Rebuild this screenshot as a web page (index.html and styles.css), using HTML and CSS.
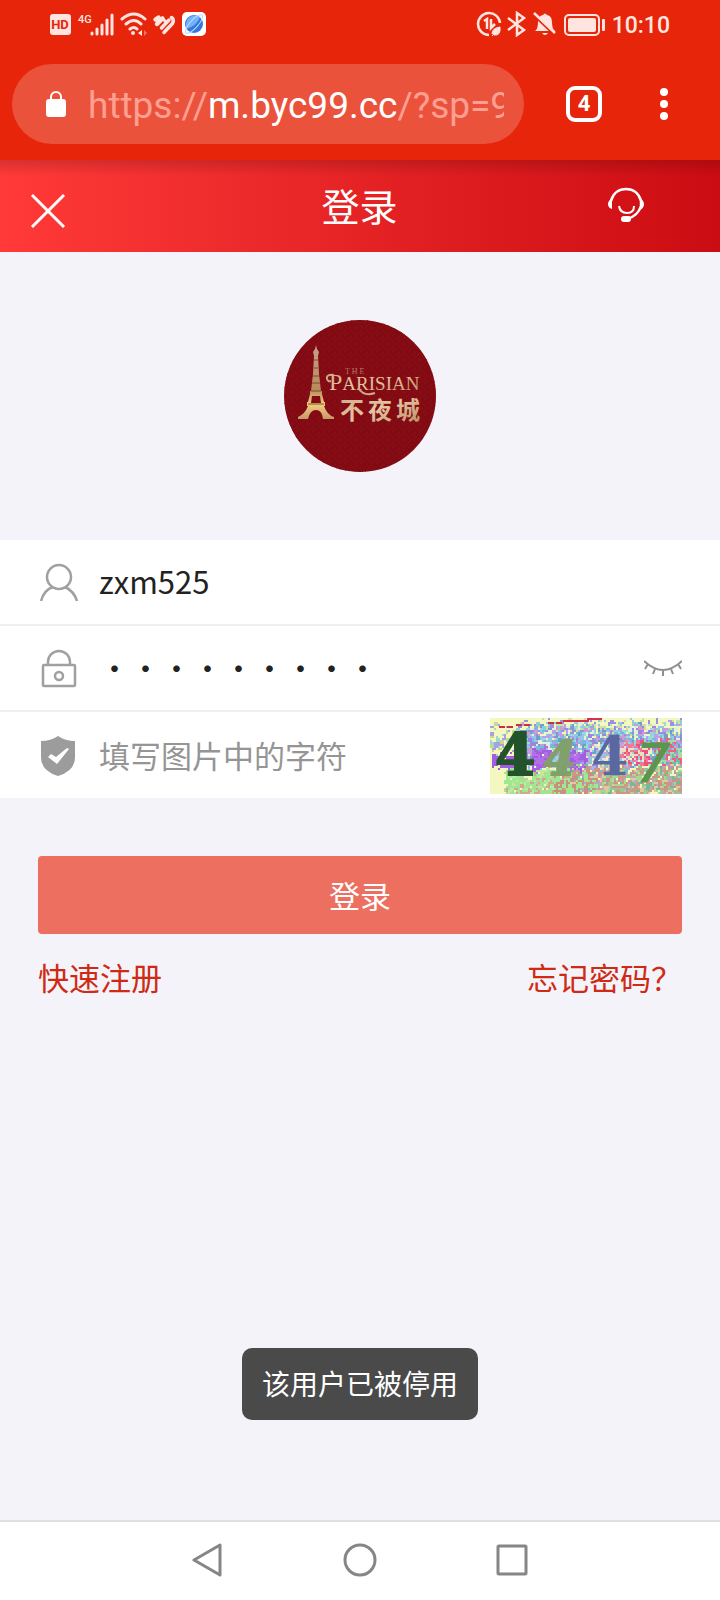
FILE: index.html
```html
<!DOCTYPE html>
<html lang="zh-CN">
<head>
    <meta charset="UTF-8">
    <meta name="viewport" content="width=device-width, initial-scale=1.0">
    <title>登录</title>
    <link rel="stylesheet" href="styles.css">
</head>
<body>
    <div class="browser">
        <div class="status-bar">
            <div class="status-left">
                <svg width="158" height="26" viewBox="0 0 158 26">
                    <g fill="#ffe4df">
                        <rect x="1" y="3" width="21" height="21" rx="3"/>
                        <text class="hd" x="11" y="18" text-anchor="middle">HD</text>
                        <text class="net" x="29" y="12">4G</text>
                    </g>
                    <g stroke="#ffe4df" stroke-width="3" stroke-linecap="round" fill="none">
                        <path d="M43 22v1M48 18v5M53 14v9M58 9v14M63 4v19"/>
                        <path d="M73 8q12-10 23 0M77 13q8-7 15 0M81 18q4-3 7 0"/>
                    </g>
                    <circle cx="84" cy="22" r="2" fill="#ffe4df"/>
                    <path d="M93 19v6l-4-3z" fill="#ffe4df"/>
                    <path d="M95 19v6l3-3z" fill="#f37666"/>
                    <g stroke="#ffe4df" stroke-linecap="round" stroke-linejoin="round" fill="none">
                        <path d="M106.500 8.500l3-2M108 13l5.500-5.500" stroke-width="4.500"/>
                        <path d="M112.500 17l7.500-8" stroke-width="3.500"/>
                        <path d="M115 21.500l8.500-9q2-4-1-6" stroke-width="3.500"/>
                        <path d="M113.500 7.500l3 3" stroke-width="3"/>
                    </g>
                    <rect x="133" y="1" width="24" height="24" rx="5" fill="#fff"/>
                    <circle cx="145" cy="13" r="9" fill="#3478dc"/>
                    <path d="M137 13a9 9 0 0 1 14-7q-3 9-14 12z" fill="#72b2fa"/>
                    <ellipse cx="145" cy="13" rx="12" ry="4" transform="rotate(-48 145 13)" fill="none" stroke="#b9dcff" stroke-width="1"/>
                </svg>
            </div>
            <div class="status-right">
                <svg width="130" height="26" viewBox="0 0 130 26">
                    <g fill="none" stroke="#ffe4df">
                        <path d="M13 24A11 11 0 1 1 24 12M8 10l3-2v10M15 8v9l4-4" stroke-width="2.500"/>
                        <path d="M16 23q0-6 8-7q1 9-6 8M16 25l4-4" fill="#ffe4df" stroke-width="1"/>
                        <path d="M32 7l16 12-7 5V2l7 5-16 12" stroke-width="2.500"/>
                        <rect x="89" y="4" width="34" height="20" rx="4" stroke-width="2"/>
                    </g>
                    <path d="M59 20q3-2 3-9 0-6 5-7 2-3 4 0 5 1 5 7 0 7 3 9zM66 22h6q-3 4-6 0" fill="#ffe4df"/>
                    <path d="M59 5l20 19" stroke="#e6250b" stroke-width="3"/>
                    <path d="M58 2l21 20" stroke="#ffe4df" stroke-width="2.500"/>
                    <rect x="92" y="7" width="28" height="14" rx="2" fill="#ffe4df"/>
                    <rect x="126" y="8" width="3" height="12" rx="1" fill="#ffe4df"/>
                </svg>
                <span class="time">10:10</span>
            </div>
        </div>
        <div class="address-bar">
            <div class="url">
                <svg width="22" height="28" viewBox="0 0 22 28">
                    <rect x="1" y="9" width="20" height="18" rx="3" fill="#fff"/>
                    <path d="M6 10V7a5 5 0 0 1 10 0v3" fill="none" stroke="#fff" stroke-width="2"/>
                </svg>
                <div class="url-text">https://<b>m.byc99.cc</b>/?sp=9</div>
            </div>
            <button type="button" class="tabs" aria-label="标签页">4</button>
            <button type="button" class="more" aria-label="更多">
                <svg width="10" height="34" viewBox="0 0 10 34" fill="#fff">
                    <circle cx="5" cy="5" r="4"/>
                    <circle cx="5" cy="17" r="4"/>
                    <circle cx="5" cy="29" r="4"/>
                </svg>
            </button>
        </div>
    </div>

    <div class="header">
        <button type="button" class="icon-btn" aria-label="关闭">
            <svg width="36" height="36" viewBox="0 0 36 36">
                <path d="M2 2l32 32M34 2L2 34" stroke="#fff" stroke-width="3"/>
            </svg>
        </button>
        <h1>登录</h1>
        <button type="button" class="icon-btn service" aria-label="客服">
            <svg width="38" height="36" viewBox="0 0 38 36">
                <path d="M4 14C6 6 12 2 19 2s13 4 15 12v5q-3 10-14 13" fill="none" stroke="#fff" stroke-width="2.500"/>
                <path d="M12 19q1 7 8 7t7-7" fill="none" stroke="#fff" stroke-width="2"/>
                <path d="M5 11q-4 3-4 6 0 4 4 5zM33 11q4 3 4 6 0 4-4 6z" fill="#fff"/>
                <rect x="14" y="29" width="10" height="6" rx="3" fill="#fff"/>
            </svg>
        </button>
    </div>

    <div class="logo">
        <svg width="152" height="152" viewBox="0 0 152 152">
            <defs>
                <pattern id="weave" width="16" height="16" patternUnits="userSpaceOnUse">
                    <path d="M8 1l7 7-7 7-7-7zM0 4l4-4M12 16l4-4M8 5v6M5 8h6" fill="none" stroke="#8a0f17" stroke-width="1"/>
                </pattern>
                <linearGradient id="gold" x1="0" y1="0" x2="1" y2="1">
                    <stop offset="0" stop-color="#d0a684"/>
                    <stop offset="0.5" stop-color="#e4c6a2"/>
                    <stop offset="1" stop-color="#b98d66"/>
                </linearGradient>
                <linearGradient id="tower" x1="0" y1="0" x2="0" y2="1">
                    <stop offset="0" stop-color="#c6a08a"/>
                    <stop offset="0.6" stop-color="#b98a5c"/>
                    <stop offset="0.8" stop-color="#f2cc80"/>
                    <stop offset="1" stop-color="#c49a68"/>
                </linearGradient>
            </defs>
            <circle cx="76" cy="76" r="76" fill="#820a13"/>
            <circle cx="76" cy="76" r="76" fill="url(#weave)"/>
            <path d="M32 25l1 4 2 3-1 4 1 18 2 17h1v3l2 8h1v4h-1q3 9 10 11v2H39q-1-9-7-9t-8 9H14v-2q7-3 10-11h-1v-4h1l2-8v-3h1l2-17 1-18-1-4 2-3zM28 76l-1 7h10l-1-7z" fill="url(#tower)" fill-rule="evenodd"/>
            <path d="M30 40h4M30 48h4M29 56h6M28 63h8M27 71h10M24 84h16" stroke="#7c4a2c" stroke-width="1"/>
            <g fill="url(#gold)">
                <text class="logo-the" x="61" y="54">T H E</text>
                <text class="logo-name" x="45" y="70"><tspan class="logo-cap">P</tspan>ARISIAN</text>
                <text class="logo-cn"><tspan x="56" y="99">不</tspan><tspan x="84" y="99">夜</tspan><tspan x="112" y="99">城</tspan></text>
            </g>
            <path d="M50 55q-8-1-7 4 1 3 4 2M74 68q6 9 17 5" fill="none" stroke="#d0a684" stroke-width="2"/>
        </svg>
    </div>

    <form id="login-form">
        <div class="fields">
            <div class="row">
                <label for="username" aria-label="账号">
                    <svg width="40" height="40" viewBox="0 0 40 40" fill="none" stroke="#a0a0a0" stroke-width="2.500">
                        <circle cx="20" cy="15" r="12"/>
                        <path d="M2 39q3-11 12-14M26 25q9 4 12 14"/>
                    </svg>
                </label>
                <input type="text" id="username" value="zxm525">
            </div>
            <div class="row">
                <label for="password" aria-label="密码">
                    <svg width="40" height="40" viewBox="0 0 40 40" fill="none" stroke="#a0a0a0" stroke-width="2.500">
                        <rect x="4" y="17" width="32" height="21" rx="1"/>
                        <path d="M9 17v-3a11 11 0 0 1 22 0v3"/>
                        <circle cx="20" cy="28" r="4"/>
                    </svg>
                </label>
                <input type="password" id="password" value="abc123456">
                <button type="button" class="eye" aria-label="显示密码">
                    <svg width="38" height="18" viewBox="0 0 38 18" fill="none" stroke="#8f8f8f" stroke-width="2">
                        <path d="M0 2q19 18 38 0M4 5l-3 5M11 10l-2 5M19 11v6M27 10l2 5M34 5l3 5"/>
                    </svg>
                </button>
            </div>
            <div class="row">
                <label for="captcha" aria-label="验证码">
                    <svg width="40" height="42" viewBox="0 0 40 42">
                        <path d="M19 1q7 5 17 5v16q0 14-17 19Q2 36 2 22V6q10 0 17-5z" fill="#9c9c9c"/>
                        <path d="M9 22l3-3 5 3 11-9 2 1-12 15z" fill="#fff"/>
                    </svg>
                </label>
                <input type="text" id="captcha" placeholder="填写图片中的字符">
                <button type="button" class="captcha" aria-label="换一张">
                    <svg width="192" height="76" viewBox="0 0 192 76">
                        <rect width="192" height="76" fill="#f4f8c0"/>
                        <g id="noise" shape-rendering="crispEdges"></g>
                        <path d="M9 9h14M26 7h14M58 5h16" stroke="#c8304a" stroke-width="2" stroke-dasharray="6 2"/>
                        <path d="M73 3h25v-2h14" fill="none" stroke="#d8304a" stroke-width="2"/>
                        <text class="code-a" x="5" y="57">4</text>
                        <text class="code-b" x="54" y="57">4</text>
                        <text class="code-c" x="101" y="57">4</text>
                        <text class="code-d" x="146" y="64">7</text>
                    </svg>
                </button>
            </div>
        </div>
        <div class="actions">
            <button type="submit" class="submit">登录</button>
            <div class="links">
                <a href="#">快速注册</a>
                <a href="#">忘记密码？</a>
            </div>
        </div>
    </form>

    <div class="toast">该用户已被停用</div>

    <div class="nav-bar">
        <button type="button" aria-label="返回">
            <svg width="34" height="34" viewBox="0 0 34 34"><path d="M29 2v30L3 17z"/></svg>
        </button>
        <button type="button" aria-label="主页">
            <svg width="34" height="34" viewBox="0 0 34 34"><circle cx="17" cy="17" r="15"/></svg>
        </button>
        <button type="button" aria-label="最近任务">
            <svg width="34" height="34" viewBox="0 0 34 34"><rect x="3" y="3" width="28" height="28" rx="1"/></svg>
        </button>
    </div>

    <script src="script.js"></script>
</body>
</html>
```
FILE: styles.css
```css
* {
    box-sizing: border-box;
}
body {
    margin: 0;
    min-height: 100vh;
    display: flex;
    flex-direction: column;
    background-color: #f3f3f9;
    font-family: "Noto Sans CJK SC", sans-serif;
    font-size: 31px;
}
button {
    border: none;
    padding: 0;
    background: none;
    font-family: inherit;
    cursor: pointer;
}
svg {
    display: block;
}

/* 浏览器顶部 */
.browser {
    background-color: #e6250b;
    color: #fff;
    font-family: Roboto, sans-serif;
    padding-bottom: 16px;
}
.status-bar {
    display: flex;
    justify-content: space-between;
    align-items: center;
    height: 48px;
    padding: 0 50px 0 49px;
}
.status-right {
    display: flex;
    align-items: center;
    gap: 6px;
}
.time {
    padding-top: 2px;
    color: #ffe4df;
    font-size: 23px;
    font-weight: 500;
}
.hd {
    fill: #e6250b;
    font-size: 13px;
    font-weight: 700;
}
.net {
    font-size: 11px;
    font-weight: 500;
}
.address-bar {
    display: flex;
    align-items: center;
    padding: 16px 51px 0 12px;
}
.url {
    flex: 1;
    min-width: 0;
    display: flex;
    align-items: center;
    gap: 21px;
    height: 80px;
    padding: 0 20px 0 33px;
    border-radius: 40px;
    background-color: #eb523b;
}
.url svg {
    flex: none;
}
.url-text {
    padding-top: 2px;
    overflow: hidden;
    white-space: nowrap;
    font-size: 37px;
    color: #ff9f92;
}
.url-text b {
    font-weight: 400;
    color: #fff;
}
.tabs {
    width: 36px;
    height: 36px;
    margin: 0 57px 0 42px;
    border: 4px solid #fff;
    border-radius: 9px;
    color: #fff;
    font-size: 22px;
    font-weight: 700;
    line-height: 28px;
}

/* 页面标题 */
.header {
    display: flex;
    justify-content: space-between;
    align-items: center;
    height: 92px;
    padding: 0 75px 0 30px;
    background: linear-gradient(rgba(0, 0, 0, 0.15), rgba(0, 0, 0, 0) 16px), linear-gradient(to right, #ff3a38, #cb0c12);
}
.header h1 {
    margin: 0;
    padding: 0 0 3px 46px;
    color: #fff;
    font-size: 38px;
    font-weight: 400;
}
.icon-btn {
    padding-top: 10px;
}
.service {
    padding: 0 0 3px;
}
.logo {
    display: flex;
    justify-content: center;
    padding: 68px 0;
}
.logo-the,
.logo-name {
    font-family: "Liberation Serif", serif;
}
.logo-the {
    font-size: 8px;
    opacity: 0.6;
}
.logo-name {
    font-size: 19px;
}
.logo-cap {
    font-size: 24px;
}
.logo-cn {
    font-size: 24px;
    font-weight: 700;
}

/* 登录表单 */
.fields {
    background-color: #fff;
}
.row {
    display: flex;
    align-items: center;
    gap: 20px;
    height: 86px;
    padding: 0 38px 0 39px;
    border-bottom: 2px solid #efeff0;
}
.row:last-child {
    height: 86px;
    padding-top: 2px;
    border-bottom: none;
}
.row input {
    flex: 1;
    min-width: 0;
    padding: 0 0 4px;
    border: none;
    outline: none;
    background: none;
    color: #222;
    font-family: inherit;
    font-size: 31px;
}
.row input::placeholder {
    color: #959595;
}
.code-a,
.code-b,
.code-c {
    font-family: "DejaVu Serif", serif;
    font-weight: 700;
}
.code-a {
    fill: #23532a;
    stroke: #23532a;
    stroke-width: 2;
    font-size: 58px;
}
.code-b {
    fill: #82a06c;
    stroke: #82a06c;
    stroke-width: 2;
    font-size: 46px;
    font-style: italic;
}
.code-c {
    fill: #5a67a0;
    font-size: 54px;
}
.code-d {
    fill: #5c9450;
    stroke: #5c9450;
    stroke-width: 1;
    font-family: "DejaVu Sans", sans-serif;
    font-size: 54px;
    font-style: italic;
}
.actions {
    padding: 58px 38px 0;
}
.submit {
    width: 100%;
    height: 78px;
    padding-bottom: 2px;
    border-radius: 4px;
    background-color: #ec6f5f;
    color: #fff;
    font-size: 31px;
}
.links {
    display: flex;
    justify-content: space-between;
    padding-top: 20px;
}
.links a {
    color: #cf2a14;
    text-decoration: none;
}

.toast {
    position: fixed;
    left: 50%;
    bottom: 180px;
    transform: translateX(-50%);
    padding: 15px 20px 17px;
    border-radius: 10px;
    background-color: #4a4a4a;
    color: #fff;
    font-size: 28px;
    line-height: 40px;
    white-space: nowrap;
}

/* 底部导航 */
.nav-bar {
    display: flex;
    justify-content: center;
    align-items: center;
    gap: 118px;
    height: 80px;
    margin-top: auto;
    padding-bottom: 2px;
    border-top: 2px solid #dfdfe1;
    background-color: #fff;
}
.nav-bar svg {
    fill: none;
    stroke: #868686;
    stroke-width: 3;
    stroke-linejoin: round;
}
```
FILE: script.js
```js
// 验证码背景噪点
const noise = document.getElementById('noise');
let seed = 4447;

function random() {
    seed = (seed * 16807) % 2147483647;
    return seed / 2147483647;
}

// 每个区域: 中心x, 中心y, 半径x, 半径y, 数量, 颜色
const areas = [
    [12, 22, 14, 18, 50, ['#9adbd0', '#a8a0e0', '#c8d890']],
    [110, 12, 84, 12, 420, ['#8fd0d8', '#9a90e0', '#d0e0a0']],
    [110, 28, 84, 22, 1700, ['#78b8d8', '#9a88dc', '#b4a0ec', '#98dcd8', '#d09ad0', '#6f9fc8', '#e4eedc', '#8fc8e8']],
    [14, 42, 12, 8, 90, ['#a45ce0']],
    [50, 40, 10, 12, 120, ['#a45ce0', '#b070e8']],
    [88, 42, 10, 10, 120, ['#a45ce0', '#b070e8']],
    [114, 40, 18, 12, 120, ['#8cc8e0', '#f0e0d0', '#a8b8d8']],
    [144, 34, 14, 12, 120, ['#f0507c', '#f07898', '#e8e0c0']],
    [178, 34, 14, 14, 160, ['#f0607c', '#70b8b0', '#a8d8a8', '#b890d8']],
    [48, 64, 34, 14, 620, ['#a0e890', '#a0e890', '#b0d898', '#c0e8a0', '#d0a890']],
    [140, 64, 58, 16, 1100, ['#d09880', '#cc9488', '#78b898', '#98c890', '#b8a8b8', '#e0c8a0', '#a8d890']],
    [84, 66, 20, 12, 120, ['#c89080', '#a0e890']]
];

areas.forEach(([cx, cy, rx, ry, count, colors]) => {
    for (let i = 0; i < count; i++) {
        const x = 2 * Math.round((cx + (random() * 2 - 1) * rx) / 2);
        const y = 2 * Math.round((cy + (random() + random() - 1) * ry * 1.2) / 2);
        if (x < 0 || x > 190 || y < 0 || y > 74) continue;
        const dot = document.createElementNS('http://www.w3.org/2000/svg', 'rect');
        dot.setAttribute('x', x);
        dot.setAttribute('y', y);
        dot.setAttribute('width', random() > 0.5 ? 4 : 2);
        dot.setAttribute('height', random() > 0.6 ? 4 : 2);
        dot.setAttribute('fill', colors[Math.floor(random() * colors.length)]);
        noise.appendChild(dot);
    }
});
```
